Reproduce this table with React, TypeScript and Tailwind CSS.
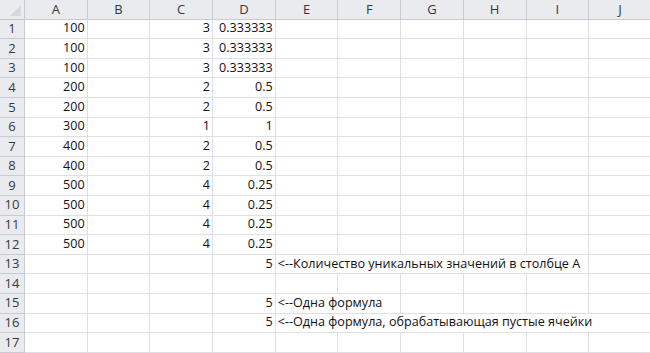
import React from 'react';

const cols = ['A', 'B', 'C', 'D', 'E', 'F', 'G', 'H', 'I', 'J'];

type Row = { a?: string; c?: string; d?: string; note?: string; span?: number };

const rows: Row[] = [
  { a: '100', c: '3', d: '0.333333' },
  { a: '100', c: '3', d: '0.333333' },
  { a: '100', c: '3', d: '0.333333' },
  { a: '200', c: '2', d: '0.5' },
  { a: '200', c: '2', d: '0.5' },
  { a: '300', c: '1', d: '1' },
  { a: '400', c: '2', d: '0.5' },
  { a: '400', c: '2', d: '0.5' },
  { a: '500', c: '4', d: '0.25' },
  { a: '500', c: '4', d: '0.25' },
  { a: '500', c: '4', d: '0.25' },
  { a: '500', c: '4', d: '0.25' },
  { d: '5', note: '<--Количество уникальных значений в столбце А', span: 5 },
  {},
  { d: '5', note: '<--Одна формула', span: 2 },
  { d: '5', note: '<--Одна формула, обрабатывающая пустые ячейки', span: 6 },
  {},
];

const spanClass: Record<number, string> = {
  2: 'col-span-2',
  5: 'col-span-5',
  6: 'col-span-6',
};

function Cell({ value, right = true, className = '' }: { value?: string; right?: boolean; className?: string }) {
  return (
    <div
      className={`h-[19.6px] border-r border-b border-[#dde0e4] bg-white flex items-center px-[2px] whitespace-nowrap overflow-hidden ${right ? 'justify-end' : 'justify-start'} ${className}`}
    >
      {value}
    </div>
  );
}

export default function App() {
  return (
    <div
      className="w-[650px] h-[353px] overflow-hidden bg-white text-[12.6px] text-[#111]"
      style={{ fontFamily: '"Open Sans", "Noto Sans", sans-serif' }}
    >
      <div className="grid grid-cols-[25px_repeat(10,62.7px)]">
        {/* corner */}
        <div className="h-[19.6px] relative bg-[#e9ebee] border-r border-b border-[#c3c8cf]">
          <div className="absolute right-[3px] bottom-[3px] w-0 h-0 border-l-[11px] border-l-transparent border-b-[11px] border-b-[#d4d7db]" />
        </div>
        {cols.map((c) => (
          <div
            key={c}
            className="h-[19.6px] bg-[#e9ebee] border-r border-b border-[#c8ccd2] flex items-center justify-center text-[#333a46] text-[13px]"
          >
            {c}
          </div>
        ))}

        {rows.map((r, i) => (
          <React.Fragment key={i}>
            <div className="h-[19.6px] bg-[#e9ebee] border-r border-b border-[#c8ccd2] flex items-center justify-center text-[#333a46] text-[13px]">
              {i + 1}
            </div>
            <Cell value={r.a} />
            <Cell />
            <Cell value={r.c} />
            <Cell value={r.d} />
            {r.note ? (
              <>
                <Cell value={r.note} right={false} className={spanClass[r.span ?? 1]} />
                {Array.from({ length: 6 - (r.span ?? 1) }).map((_, k) => (
                  <Cell key={k} />
                ))}
              </>
            ) : (
              Array.from({ length: 6 }).map((_, k) => <Cell key={k} />)
            )}
          </React.Fragment>
        ))}
      </div>
    </div>
  );
}
